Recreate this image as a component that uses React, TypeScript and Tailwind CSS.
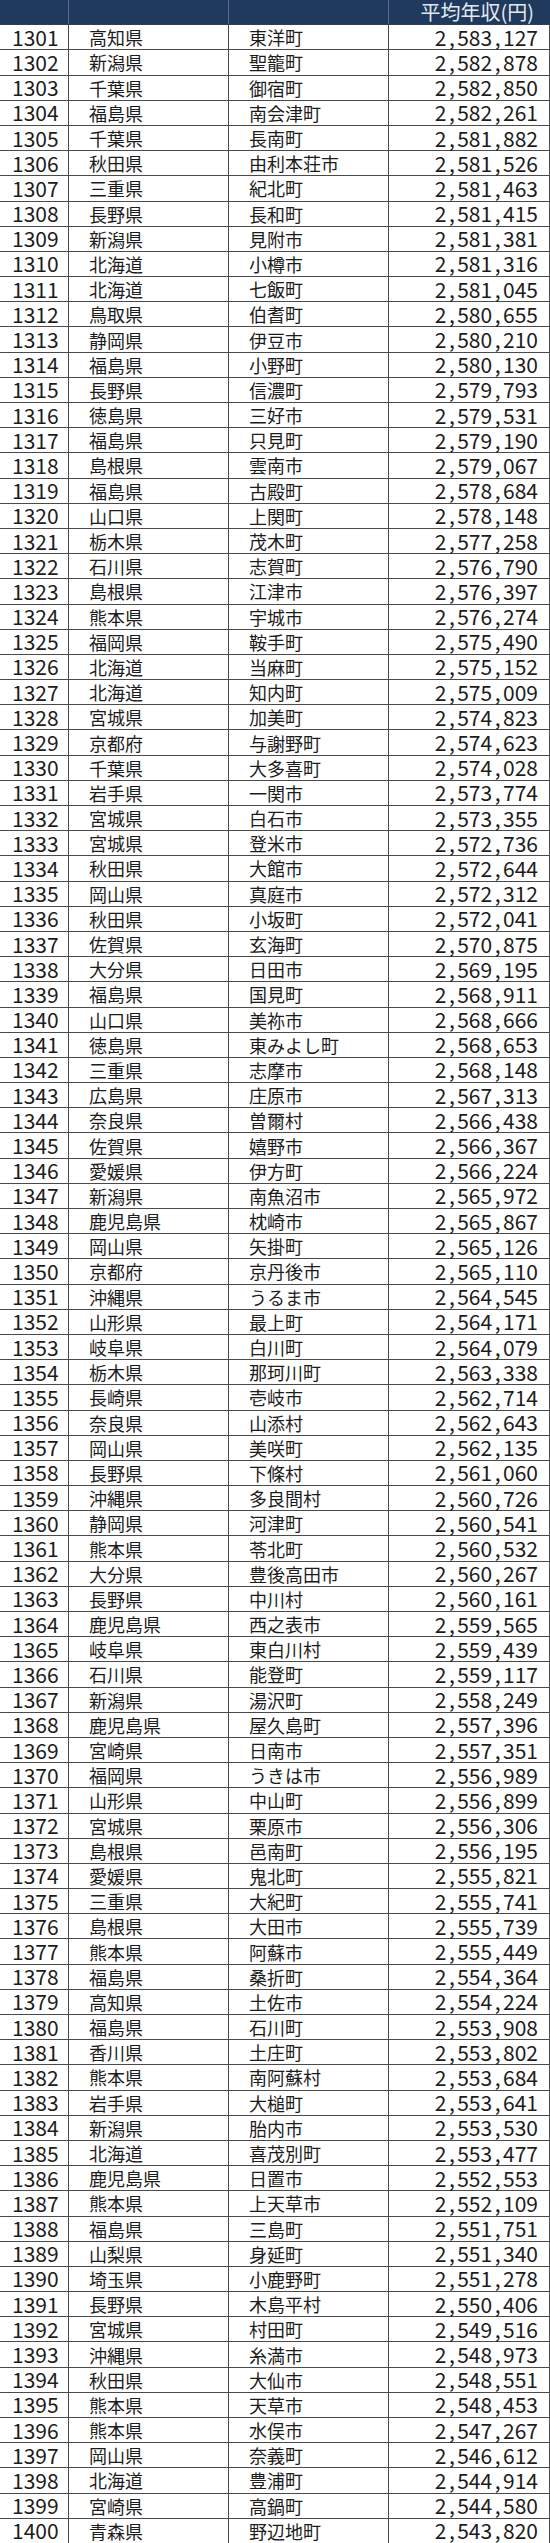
const rows: [number, string, string, string][] = [
  [1301, "高知県", "東洋町", "2,583,127"],
  [1302, "新潟県", "聖籠町", "2,582,878"],
  [1303, "千葉県", "御宿町", "2,582,850"],
  [1304, "福島県", "南会津町", "2,582,261"],
  [1305, "千葉県", "長南町", "2,581,882"],
  [1306, "秋田県", "由利本荘市", "2,581,526"],
  [1307, "三重県", "紀北町", "2,581,463"],
  [1308, "長野県", "長和町", "2,581,415"],
  [1309, "新潟県", "見附市", "2,581,381"],
  [1310, "北海道", "小樽市", "2,581,316"],
  [1311, "北海道", "七飯町", "2,581,045"],
  [1312, "鳥取県", "伯耆町", "2,580,655"],
  [1313, "静岡県", "伊豆市", "2,580,210"],
  [1314, "福島県", "小野町", "2,580,130"],
  [1315, "長野県", "信濃町", "2,579,793"],
  [1316, "徳島県", "三好市", "2,579,531"],
  [1317, "福島県", "只見町", "2,579,190"],
  [1318, "島根県", "雲南市", "2,579,067"],
  [1319, "福島県", "古殿町", "2,578,684"],
  [1320, "山口県", "上関町", "2,578,148"],
  [1321, "栃木県", "茂木町", "2,577,258"],
  [1322, "石川県", "志賀町", "2,576,790"],
  [1323, "島根県", "江津市", "2,576,397"],
  [1324, "熊本県", "宇城市", "2,576,274"],
  [1325, "福岡県", "鞍手町", "2,575,490"],
  [1326, "北海道", "当麻町", "2,575,152"],
  [1327, "北海道", "知内町", "2,575,009"],
  [1328, "宮城県", "加美町", "2,574,823"],
  [1329, "京都府", "与謝野町", "2,574,623"],
  [1330, "千葉県", "大多喜町", "2,574,028"],
  [1331, "岩手県", "一関市", "2,573,774"],
  [1332, "宮城県", "白石市", "2,573,355"],
  [1333, "宮城県", "登米市", "2,572,736"],
  [1334, "秋田県", "大館市", "2,572,644"],
  [1335, "岡山県", "真庭市", "2,572,312"],
  [1336, "秋田県", "小坂町", "2,572,041"],
  [1337, "佐賀県", "玄海町", "2,570,875"],
  [1338, "大分県", "日田市", "2,569,195"],
  [1339, "福島県", "国見町", "2,568,911"],
  [1340, "山口県", "美祢市", "2,568,666"],
  [1341, "徳島県", "東みよし町", "2,568,653"],
  [1342, "三重県", "志摩市", "2,568,148"],
  [1343, "広島県", "庄原市", "2,567,313"],
  [1344, "奈良県", "曽爾村", "2,566,438"],
  [1345, "佐賀県", "嬉野市", "2,566,367"],
  [1346, "愛媛県", "伊方町", "2,566,224"],
  [1347, "新潟県", "南魚沼市", "2,565,972"],
  [1348, "鹿児島県", "枕崎市", "2,565,867"],
  [1349, "岡山県", "矢掛町", "2,565,126"],
  [1350, "京都府", "京丹後市", "2,565,110"],
  [1351, "沖縄県", "うるま市", "2,564,545"],
  [1352, "山形県", "最上町", "2,564,171"],
  [1353, "岐阜県", "白川町", "2,564,079"],
  [1354, "栃木県", "那珂川町", "2,563,338"],
  [1355, "長崎県", "壱岐市", "2,562,714"],
  [1356, "奈良県", "山添村", "2,562,643"],
  [1357, "岡山県", "美咲町", "2,562,135"],
  [1358, "長野県", "下條村", "2,561,060"],
  [1359, "沖縄県", "多良間村", "2,560,726"],
  [1360, "静岡県", "河津町", "2,560,541"],
  [1361, "熊本県", "苓北町", "2,560,532"],
  [1362, "大分県", "豊後高田市", "2,560,267"],
  [1363, "長野県", "中川村", "2,560,161"],
  [1364, "鹿児島県", "西之表市", "2,559,565"],
  [1365, "岐阜県", "東白川村", "2,559,439"],
  [1366, "石川県", "能登町", "2,559,117"],
  [1367, "新潟県", "湯沢町", "2,558,249"],
  [1368, "鹿児島県", "屋久島町", "2,557,396"],
  [1369, "宮崎県", "日南市", "2,557,351"],
  [1370, "福岡県", "うきは市", "2,556,989"],
  [1371, "山形県", "中山町", "2,556,899"],
  [1372, "宮城県", "栗原市", "2,556,306"],
  [1373, "島根県", "邑南町", "2,556,195"],
  [1374, "愛媛県", "鬼北町", "2,555,821"],
  [1375, "三重県", "大紀町", "2,555,741"],
  [1376, "島根県", "大田市", "2,555,739"],
  [1377, "熊本県", "阿蘇市", "2,555,449"],
  [1378, "福島県", "桑折町", "2,554,364"],
  [1379, "高知県", "土佐市", "2,554,224"],
  [1380, "福島県", "石川町", "2,553,908"],
  [1381, "香川県", "土庄町", "2,553,802"],
  [1382, "熊本県", "南阿蘇村", "2,553,684"],
  [1383, "岩手県", "大槌町", "2,553,641"],
  [1384, "新潟県", "胎内市", "2,553,530"],
  [1385, "北海道", "喜茂別町", "2,553,477"],
  [1386, "鹿児島県", "日置市", "2,552,553"],
  [1387, "熊本県", "上天草市", "2,552,109"],
  [1388, "福島県", "三島町", "2,551,751"],
  [1389, "山梨県", "身延町", "2,551,340"],
  [1390, "埼玉県", "小鹿野町", "2,551,278"],
  [1391, "長野県", "木島平村", "2,550,406"],
  [1392, "宮城県", "村田町", "2,549,516"],
  [1393, "沖縄県", "糸満市", "2,548,973"],
  [1394, "秋田県", "大仙市", "2,548,551"],
  [1395, "熊本県", "天草市", "2,548,453"],
  [1396, "熊本県", "水俣市", "2,547,267"],
  [1397, "岡山県", "奈義町", "2,546,612"],
  [1398, "北海道", "豊浦町", "2,544,914"],
  [1399, "宮崎県", "高鍋町", "2,544,580"],
  [1400, "青森県", "野辺地町", "2,543,820"],
];

// commas in the source font are much wider than in Noto, so pad them
function Amount({ value }: { value: string }) {
  const parts = value.split(",");
  return (
    <span>
      {parts.map((p, i) => (
        <span key={i}>
          {i > 0 && <span className="mx-[2.5px]">,</span>}
          {p}
        </span>
      ))}
    </span>
  );
}

export default function App() {
  return (
    <main className="w-[550px] h-[2543px] flex flex-col bg-white font-['Noto_Sans_CJK_JP','Noto_Sans',sans-serif] text-[#1c1c1c] leading-none">
      <div className="flex-1 min-h-0 grid grid-cols-[69px_160px_160px_161px] bg-[#1f3a5c] border-b border-[#3d3d3d]">
        <div className="border-r border-[#56698a]" />
        <div className="border-r border-[#56698a]" />
        <div className="border-r border-[#56698a]" />
        <div className="flex items-center justify-end pr-[16px] text-[20px] text-[#e4e9f1]">
          平均年収(円)
        </div>
      </div>
      {rows.map(([rank, pref, city, amount]) => (
        <div
          key={rank}
          className="flex-1 min-h-0 grid grid-cols-[69px_160px_160px_161px] border-b border-[#4a4a4a] last:border-b-0"
        >
          <div className="flex items-center pl-[12px] text-[21px] border-r border-[#4a4a4a]">
            {rank}
          </div>
          <div className="flex items-center pl-[20px] text-[18px] border-r border-[#4a4a4a]">
            {pref}
          </div>
          <div className="flex items-center pl-[20px] text-[18px] border-r border-[#4a4a4a]">
            {city}
          </div>
          <div className="flex items-center justify-end pr-[11px] text-[21px] border-r border-[#4a4a4a]">
            <Amount value={amount} />
          </div>
        </div>
      ))}
    </main>
  );
}
